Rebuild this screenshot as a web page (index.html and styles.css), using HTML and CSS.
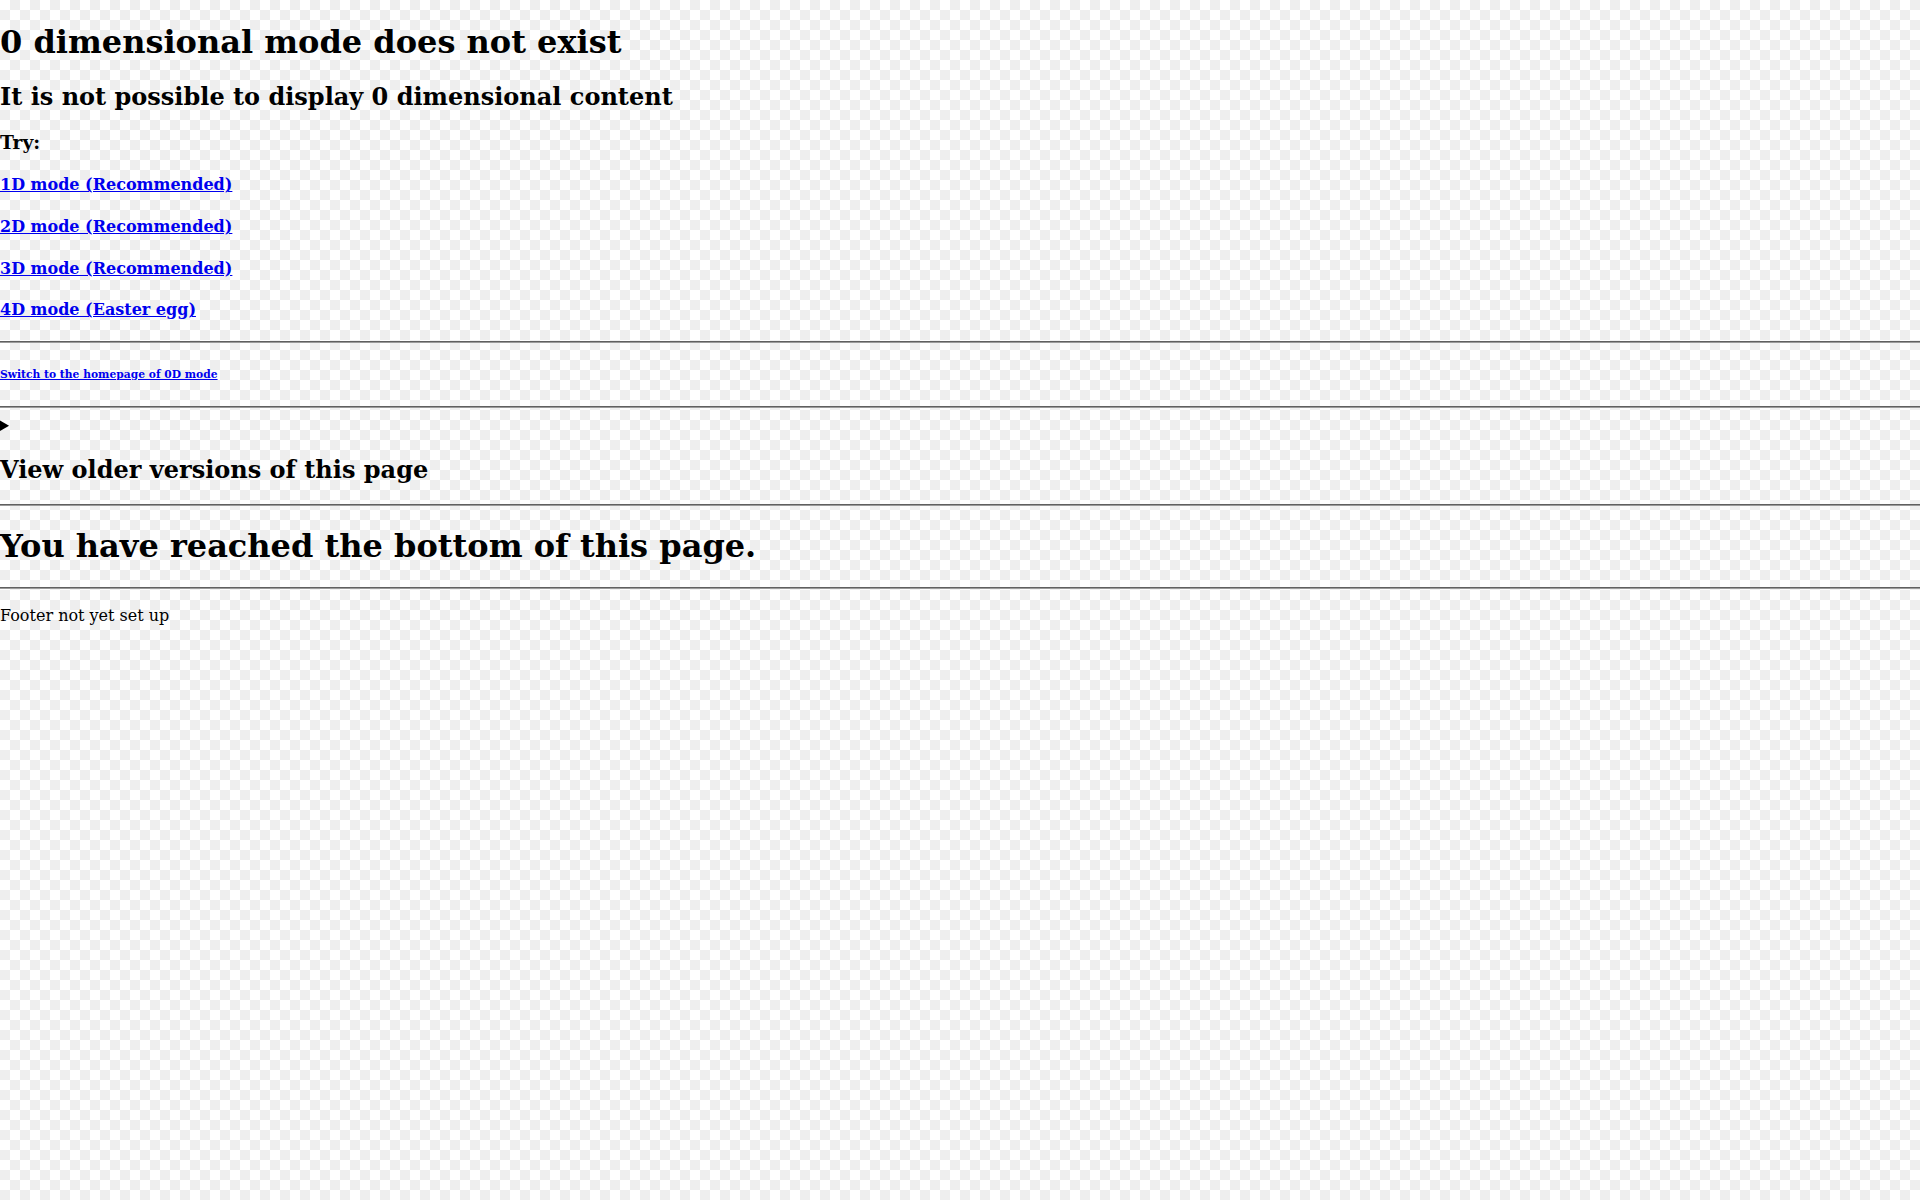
FILE: index.html
```html
<!DOCTYPE html>
<html lang="en">
<head>
<meta charset="utf-8">
<title>0 dimensional mode</title>
<link rel="stylesheet" href="styles.css">
</head>
<body class="page">
<h1 class="title">0 dimensional mode does not exist</h1>
<h2>It is not possible to display 0 dimensional content</h2>
<h3 class="try">Try:</h3>
<h4 class="opt"><a href="#">1D mode (Recommended)</a></h4>
<h4 class="opt"><a href="#">2D mode (Recommended)</a></h4>
<h4 class="opt"><a href="#">3D mode (Recommended)</a></h4>
<h4 class="opt opt-last"><a href="#">4D mode (Easter egg)</a></h4>
<hr class="rule">
<h6><a href="#">Switch to the homepage of 0D mode</a></h6>
<hr class="rule">
<details class="older">
<summary><h2 class="older-title">View older versions of this page</h2></summary>
<p>No older versions.</p>
</details>
<hr class="rule">
<h1>You have reached the bottom of this page.</h1>
<hr class="rule">
<p class="footer">Footer not yet set up</p>
</body>
</html>
```

FILE: styles.css
```css
html {
  background-color: #ffffff;
  background-image: conic-gradient(#eeeeee 25%, #ffffff 0 50%, #eeeeee 0 75%, #ffffff 0);
  background-size: 20px 20px;
}
.page {
  margin: 0;
  font-family: "DejaVu Serif", serif;
  color: #000;
}
.title {
  margin-top: 22.5px;
}
.try {
  margin-bottom: 22.5px;
}
.opt {
  margin: 22.6px 0;
}
.opt-last {
  margin-bottom: 21.8px;
}
.rule {
  height: 0;
  border: none;
  border-top: 1px solid #5f5f5f;
  border-bottom: 1px solid #9a9a9a;
}
.older-title {
  margin-bottom: 12px;
}
.footer {
  margin-top: 17px;
}
```
